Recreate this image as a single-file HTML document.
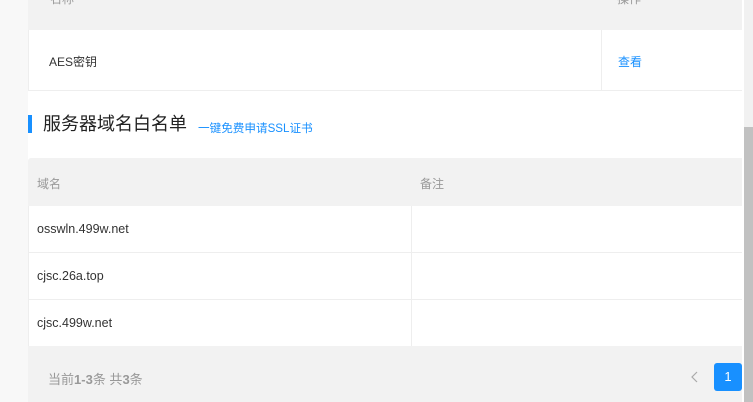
<!DOCTYPE html>
<html><head><meta charset="utf-8"><style>
*{margin:0;padding:0;box-sizing:border-box}
body{width:753px;height:402px;overflow:hidden;background:#fff;font-family:"Liberation Sans","Noto Sans CJK SC",sans-serif;position:relative}
.abs{position:absolute}
.t{font-size:12px;color:#333}
</style></head><body>
<div class="abs" style="left:0;top:0;width:28px;height:402px;background:#f8f8f8"></div>
<!-- table 1 -->
<div class="abs" style="left:28px;top:0;width:714px;height:30px;background:#f2f2f2"></div>
<div class="abs t" style="left:50px;top:-10px;color:#999">名称</div>
<div class="abs t" style="left:617px;top:-10px;color:#999">操作</div>
<div class="abs" style="left:28px;top:30px;width:714px;height:61px;border:1px solid #eee;border-top:none;border-right:none"></div>
<div class="abs" style="left:601px;top:30px;width:1px;height:60px;background:#eee"></div>
<div class="abs t" style="left:49px;top:53px">AES密钥</div>
<div class="abs t" style="left:618px;top:53px;color:#1890ff">查看</div>
<!-- heading -->
<div class="abs" style="left:28px;top:115px;width:4px;height:18px;background:#1890ff"></div>
<div class="abs" style="left:43px;top:112px;font-size:18px;color:#222;line-height:24px">服务器域名白名单</div>
<div class="abs" style="left:198px;top:120px;font-size:11.6px;color:#1890ff">一键免费申请SSL证书</div>
<!-- table 2 -->
<div class="abs" style="left:28px;top:158px;width:714px;height:48px;background:#f2f2f2;border-radius:3px 0 0 0"></div>
<div class="abs t" style="left:37px;top:175px;color:#999">域名</div>
<div class="abs t" style="left:420px;top:175px;color:#999">备注</div>
<div class="abs" style="left:28px;top:206px;width:1px;height:140px;background:#eee"></div>
<div class="abs" style="left:411px;top:206px;width:1px;height:140px;background:#eee"></div>
<div class="abs" style="left:28px;top:252px;width:714px;height:1px;background:#eee"></div>
<div class="abs" style="left:28px;top:299px;width:714px;height:1px;background:#eee"></div>
<div class="abs t" style="left:37px;top:222px;font-size:12.5px">osswln.499w.net</div>
<div class="abs t" style="left:37px;top:269px;font-size:12.5px">cjsc.26a.top</div>
<div class="abs t" style="left:37px;top:316px;font-size:12.5px">cjsc.499w.net</div>
<div class="abs" style="left:28px;top:346px;width:714px;height:56px;background:#f2f2f2"></div>
<div class="abs" style="left:48px;top:369px;font-size:13px;color:#999">当前<b>1-3</b>条 共<b>3</b>条</div>
<svg class="abs" style="left:690px;top:371px" width="10" height="12" viewBox="0 0 10 12"><path d="M7 1 L2 6 L7 11" fill="none" stroke="#aaa" stroke-width="1.2"/></svg>
<div class="abs" style="left:714px;top:363px;width:28px;height:28px;background:#1890ff;border-radius:3px;color:#fff;font-size:13px;text-align:center;line-height:28px">1</div>
<!-- scrollbar -->
<div class="abs" style="left:744px;top:0;width:9px;height:402px;background:#f1f1f1"></div>
<div class="abs" style="left:744px;top:127px;width:9px;height:275px;background:#c1c1c1"></div>
</body></html>
